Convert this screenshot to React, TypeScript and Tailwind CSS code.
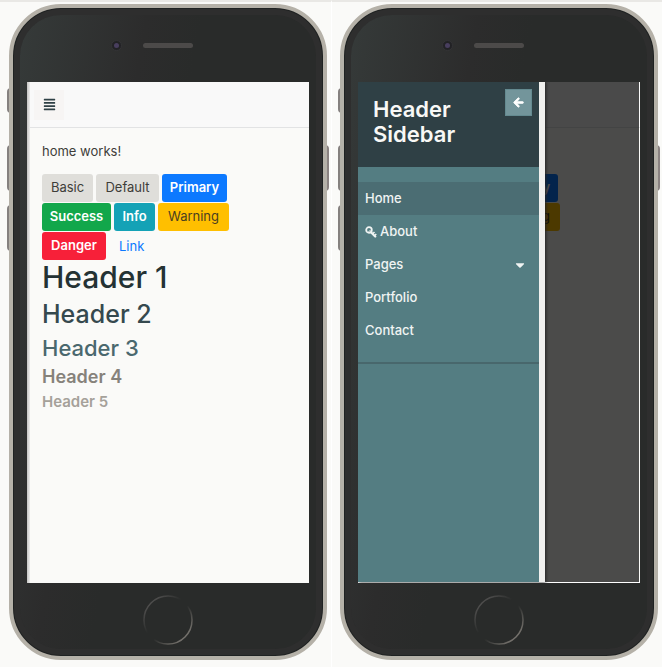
import type { ReactNode } from "react";
import { FaAlignJustify, FaArrowLeft, FaCaretDown } from "react-icons/fa";

const buttons = [
  { label: "Basic", style: "min-w-[51px] bg-[#dfdeda] text-[#3e3d39]" },
  { label: "Default", style: "min-w-[63px] bg-[#dfdeda] text-[#3e3d39]" },
  { label: "Primary", style: "min-w-[65px] bg-[#0c79ff] font-semibold text-white" },
  { label: "Success", style: "min-w-[69px] bg-[#12a74b] font-semibold text-white" },
  { label: "Info", style: "min-w-[41px] bg-[#14a2b6] font-semibold text-white" },
  { label: "Warning", style: "min-w-[71px] bg-[#ffbf00] text-[#4a4020]" },
  { label: "Danger", style: "min-w-[64px] bg-[#f72039] font-semibold text-white" },
];

// With the sidebar open, only the buttons that reach past its edge stay in view.
const pastSidebar = ["Primary", "Warning"];

function HomePage({ covered = false }: { covered?: boolean }) {
  return (
    <div className="flex grow flex-col bg-[#fafaf8]">
      <header className="flex h-[46px] items-center border-b border-[#e2e3e4] bg-[#f9f9f9] px-[7px]">
        <button
          type="button"
          aria-label="Toggle sidebar"
          className="flex size-[30px] items-center justify-center bg-[#f7f5f4] text-[#2f4045]"
        >
          <FaAlignJustify className="size-[13px]" />
        </button>
      </header>
      <main className="px-[15px] pt-[13px]">
        <p className="mb-[13px] h-5 text-[13px] leading-5 text-[#3e3d39]">{!covered && "home works!"}</p>
        <div className="flex flex-wrap gap-x-[3px] gap-y-px text-[13px]">
          {buttons.map((b) => {
            const hidden = covered && !pastSidebar.includes(b.label);
            return (
              <button
                key={b.label}
                type="button"
                className={`h-7 rounded-[3px] text-center ${b.style} ${hidden ? "invisible" : ""}`}
              >
                {!hidden && b.label}
              </button>
            );
          })}
          {!covered && (
            <a href="#link" className="px-[10px] leading-7 text-[#0c79ff]">
              Link
            </a>
          )}
        </div>
        {!covered && (
          <>
            <h1 className="text-[30px] leading-[34px] font-medium text-[#243234]">Header 1</h1>
            <h2 className="mt-1 text-[25px] leading-8 font-medium text-[#35494e]">Header 2</h2>
            <h3 className="mt-1 text-[22px] leading-7 font-medium text-[#4a686e]">Header 3</h3>
            <h4 className="mt-1 text-[18px] leading-[22px] font-semibold text-[#86827b]">Header 4</h4>
            <h5 className="mt-1 text-[15px] leading-5 font-semibold text-[#a5a19a]">Header 5</h5>
          </>
        )}
      </main>
    </div>
  );
}

const menu = ["Home", "About", "Pages", "Portfolio", "Contact"];

function KeyIcon() {
  return (
    <svg viewBox="0 0 24 24" className="mr-[3px] size-3" fill="none" stroke="currentColor" aria-hidden="true">
      <circle cx="8" cy="8" r="5.6" strokeWidth="3.6" />
      <path d="M12 12.5 L20.5 21" strokeWidth="4.4" strokeLinecap="round" />
      <path d="M15.5 15.5 L19 12 M19.5 19 L22.5 16" strokeWidth="3.2" />
      <path d="M7 12 L11 8" strokeWidth="2" />
    </svg>
  );
}

function Sidebar() {
  return (
    <aside className="absolute inset-y-0 left-0 flex w-[187px] flex-col border-r-[6px] border-[#f0f0ee] bg-[#547d82] text-white shadow-[1px_0_3px_#222]">
      <div className="flex h-[85px] items-start justify-between bg-[#2f4045] pt-[7px] pr-[7px] pl-[15px]">
        <h3 className="pt-2 text-[22px] leading-[25px] font-semibold text-[#f8f8f6]">
          Header
          <br />
          Sidebar
        </h3>
        <button
          type="button"
          aria-label="Close sidebar"
          className="flex size-[27px] items-center justify-center border border-[#648a90] bg-[#73959b]"
        >
          <FaArrowLeft className="size-[11px] overflow-visible stroke-current stroke-[40]" />
        </button>
      </div>
      <nav>
        <ul className="border-b-2 border-[#48676c] py-[15px] text-[13px] font-medium text-[#f0f4f3]">
          {menu.map((item) => (
            <li key={item}>
              <a
                href={`#${item.toLowerCase()}`}
                className={`flex h-[33px] items-center px-[7px] ${item === "Home" ? "bg-[#4b6d73]" : ""}`}
              >
                {item === "About" && <KeyIcon />}
                {item}
                {item === "Pages" && <FaCaretDown className="mr-[5px] ml-auto size-[14px]" />}
              </a>
            </li>
          ))}
        </ul>
      </nav>
    </aside>
  );
}

function Phone({ children }: { children: ReactNode }) {
  return (
    <div className="relative">
      <span className="absolute top-[84px] -left-0.5 h-[25px] w-1 rounded-l-sm bg-[#85817f]" />
      <span className="absolute top-[141px] -left-0.5 h-[46px] w-1 rounded-l-sm bg-[#85817f]" />
      <span className="absolute top-[201px] -left-0.5 h-[46px] w-1 rounded-l-sm bg-[#85817f]" />
      <span className="absolute top-[141px] -right-0.5 h-[46px] w-1 rounded-r-sm bg-[#8a8281]" />
      <div className="relative rounded-[52px] border-4 border-[#b5b1a8] bg-[#292b2a] bg-linear-[100deg,#363b3a_0%,#2c2c2c_32%,#292b2a_45%] px-[14px] shadow-[inset_0_0_0_1px_#1f2222,inset_0_0_0_7px_#2e2e2e]">
        <div className="grid h-[74px] grid-cols-[1fr_auto_1fr] items-center">
          <span className="mr-[21px] flex size-[11px] items-center justify-center justify-self-end rounded-full border border-[#343436] bg-[#222225]">
            <span className="size-[5px] rounded-full bg-[#483e5e]" />
          </span>
          <span className="h-[5px] w-[50px] rounded-full bg-[#4c4a49]" />
        </div>
        <div className="relative flex min-h-[501px] flex-col overflow-hidden bg-white">{children}</div>
        <div className="flex h-[73px] items-center justify-center">
          <svg viewBox="0 0 50 50" className="size-[50px]" fill="none" strokeWidth="1.5">
            <defs>
              <linearGradient id="ring" x1="0" y1="0" x2="1" y2="1">
                <stop offset="0.1" stopColor="#555453" />
                <stop offset="0.42" stopColor="#292b2a" />
                <stop offset="0.55" stopColor="#292b2a" />
                <stop offset="0.85" stopColor="#74716c" />
              </linearGradient>
            </defs>
            <circle cx="25" cy="25" r="24" stroke="url(#ring)" />
          </svg>
        </div>
      </div>
    </div>
  );
}

export default function App() {
  return (
    <div className="grid grid-cols-2 bg-white pr-[10px] font-['Inter',sans-serif]">
      <section className="border-t-2 border-[#e9e8e5] bg-[#fafaf8] pt-0.5 pr-1 pb-[7px] pl-[9px]">
        <Phone>
          <HomePage />
          <span className="absolute inset-y-0 left-0 w-[3px] bg-linear-to-r from-[#c4c4c3] to-[#eeeeed]" />
        </Phone>
      </section>
      <section className="border-t-2 border-l border-t-[#e9e8e5] border-l-white bg-[#fafaf8] pt-0.5 pr-1 pb-[7px] pl-2">
        <Phone>
          <div className="relative mr-px mb-px flex grow flex-col">
            <div inert className="-mr-px flex grow flex-col">
              <HomePage covered />
            </div>
            <div className="absolute inset-0 bg-black/70" />
            <Sidebar />
          </div>
        </Phone>
      </section>
    </div>
  );
}
